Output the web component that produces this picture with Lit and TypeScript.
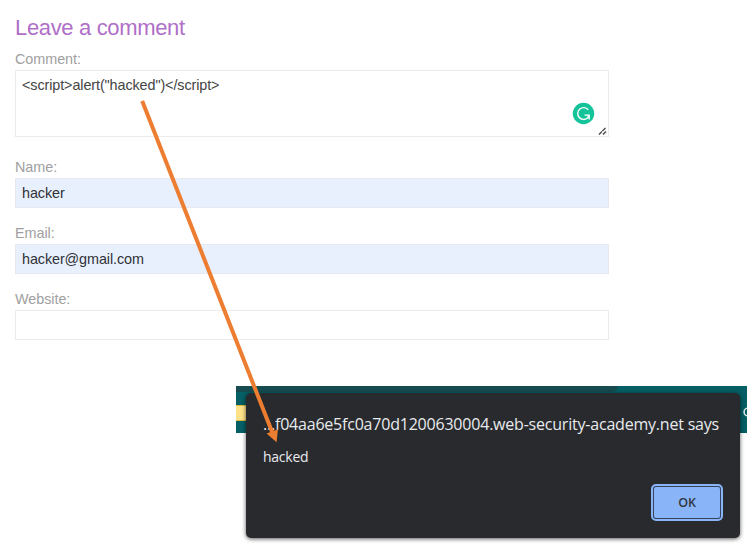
import { LitElement, html, css, svg } from "lit";
import { customElement, property } from "lit/decorators.js";

@customElement("form-field")
class FormField extends LitElement {
  @property() label = "";
  @property() value = "";
  @property({ type: Boolean, reflect: true }) filled = false;
  @property({ type: Boolean, reflect: true }) multiline = false;

  static styles = css`
    :host { display: block; font: 14.4px/18px "Liberation Sans", Arial, sans-serif; }
    .label { display: block; height: 18px; margin-bottom: 2px; color: #a0a0a0; letter-spacing: -.05px; }
    .box {
      box-sizing: border-box; height: 30px; padding: 5px 6px; position: relative;
      border: 1px solid #ebebeb; background: #fff; color: #303236; letter-spacing: -.1px;
    }
    :host([filled]) .box { background: #e8f0fe; border-color: #e6e9ef; }
    :host([multiline]) .box { height: 67px; color: #444; }
    .badge { position: absolute; right: 13px; top: 31px; width: 23px; height: 23px; }
    .grip { position: absolute; right: 1px; bottom: 1px; width: 9px; height: 8px; }
  `;

  render() {
    return html`
      <span class="label">${this.label}</span>
      <div class="box">
        <span>${this.value}</span>
        ${this.multiline
          ? html`
              <svg class="badge" viewBox="0 0 23 23">
                <circle cx="11.5" cy="11.5" r="10.7" fill="#15c39a" />
                <path d="M16.2 7.8A5.9 5.9 0 1 0 15.4 16.1L17 13.4M12.5 13.1H17.2V17.4" fill="none" stroke="#fff" stroke-width="1.35" />
              </svg>
              <svg class="grip" viewBox="0 0 9 8">
                <path d="M1 7.5L8 .5M5 7.5L8 4.5" fill="none" stroke="#505050" stroke-width="1.5" stroke-dasharray="4.2 .7" />
              </svg>`
          : null}
      </div>
    `;
  }
}

@customElement("alert-dialog")
class AlertDialog extends LitElement {
  static styles = css`
    :host {
      display: flex; flex-direction: column; box-sizing: border-box; padding: 19px 17px 16.5px 17.5px;
      background: #292a2d; color: #e8eaed; border-radius: 5px;
      box-shadow: 0 1px 4px rgba(0, 0, 0, .65);
      font-family: "Open Sans", "Noto Sans", sans-serif; white-space: nowrap;
    }
    .title { font-size: 16px; line-height: 24px; letter-spacing: -.21px; }
    .message { font-size: 14px; line-height: 20px; margin-top: 11px; letter-spacing: -.25px; }
    .ok {
      align-self: flex-end; margin-top: auto; box-sizing: border-box; width: 72px; height: 37px;
      border: 2px solid #8ab4f8; border-radius: 5px; padding: 1px; background: #35435c;
      font: 600 12.5px/31px "Open Sans", sans-serif; letter-spacing: -.2px; color: #303640;
    }
    .face { display: block; height: 31px; border-radius: 2px; background: #8ab4f8; text-align: center; }
  `;
  render() {
    return html`
      <div class="title">...f04aa6e5fc0a70d1200630004.web-security-academy.net says</div>
      <div class="message">hacked</div>
      <div class="ok"><span class="face">OK</span></div>
    `;
  }
}

@customElement("app-root")
class AppRoot extends LitElement {
  static styles = css`
    :host { display: block; position: relative; width: 756px; height: 548px; overflow: hidden; background: #fff; }
    .form { width: 593.5px; padding: 14px 0 0 15px; }
    .heading { margin: 0; height: 36px; font: 400 22px/27px "Liberation Sans", Arial, sans-serif; letter-spacing: -.34px; color: #b06fc8; }
    .name { margin-top: 20.5px; }
    .email, .website { margin-top: 16px; }
    .browser { position: relative; width: 511px; height: 47px; margin: 46px 0 0 236px; background: #055f64; }
    .tabs { width: 382px; height: 6px; background: #164b50; border-bottom-right-radius: 8px; }
    .folder { box-sizing: border-box; width: 10px; height: 16px; margin-top: 13px; background: #fee28a; border: solid #d8b83e; border-width: 1px 0; }
    .account { position: absolute; left: 507px; top: 20px; width: 4px; height: 12px; }
    .dialog { position: absolute; left: 9.5px; top: 7px; width: 494.5px; height: 145px; }
    .arrow { position: absolute; left: 0; top: 0; width: 756px; height: 548px; }
  `;
  render() {
    return html`
      <section class="form">
        <h1 class="heading">Leave a comment</h1>
        <form-field class="comment" multiline label="Comment:" value='<script>alert("hacked")</script>'></form-field>
        <form-field class="name" filled label="Name:" value="hacker"></form-field>
        <form-field class="email" filled label="Email:" value="hacker@gmail.com"></form-field>
        <form-field class="website" label="Website:"></form-field>
      </section>
      <section class="browser">
        <div class="tabs"></div>
        <div class="folder"></div>
        <svg class="account" viewBox="0 0 4 12"><circle cx="5" cy="6" r="4" fill="none" stroke="#e4eeee" stroke-width="1.4" /></svg>
        <alert-dialog class="dialog"></alert-dialog>
      </section>
      <svg class="arrow" viewBox="0 0 756 548">
        ${svg`<path d="M142.2 101L272.5 433" fill="none" stroke="#ed7d31" stroke-width="4" /><path d="M266.6 433.6L277.9 429.2L276.6 442.2Z" fill="#ed7d31" />`}
      </svg>
    `;
  }
}
